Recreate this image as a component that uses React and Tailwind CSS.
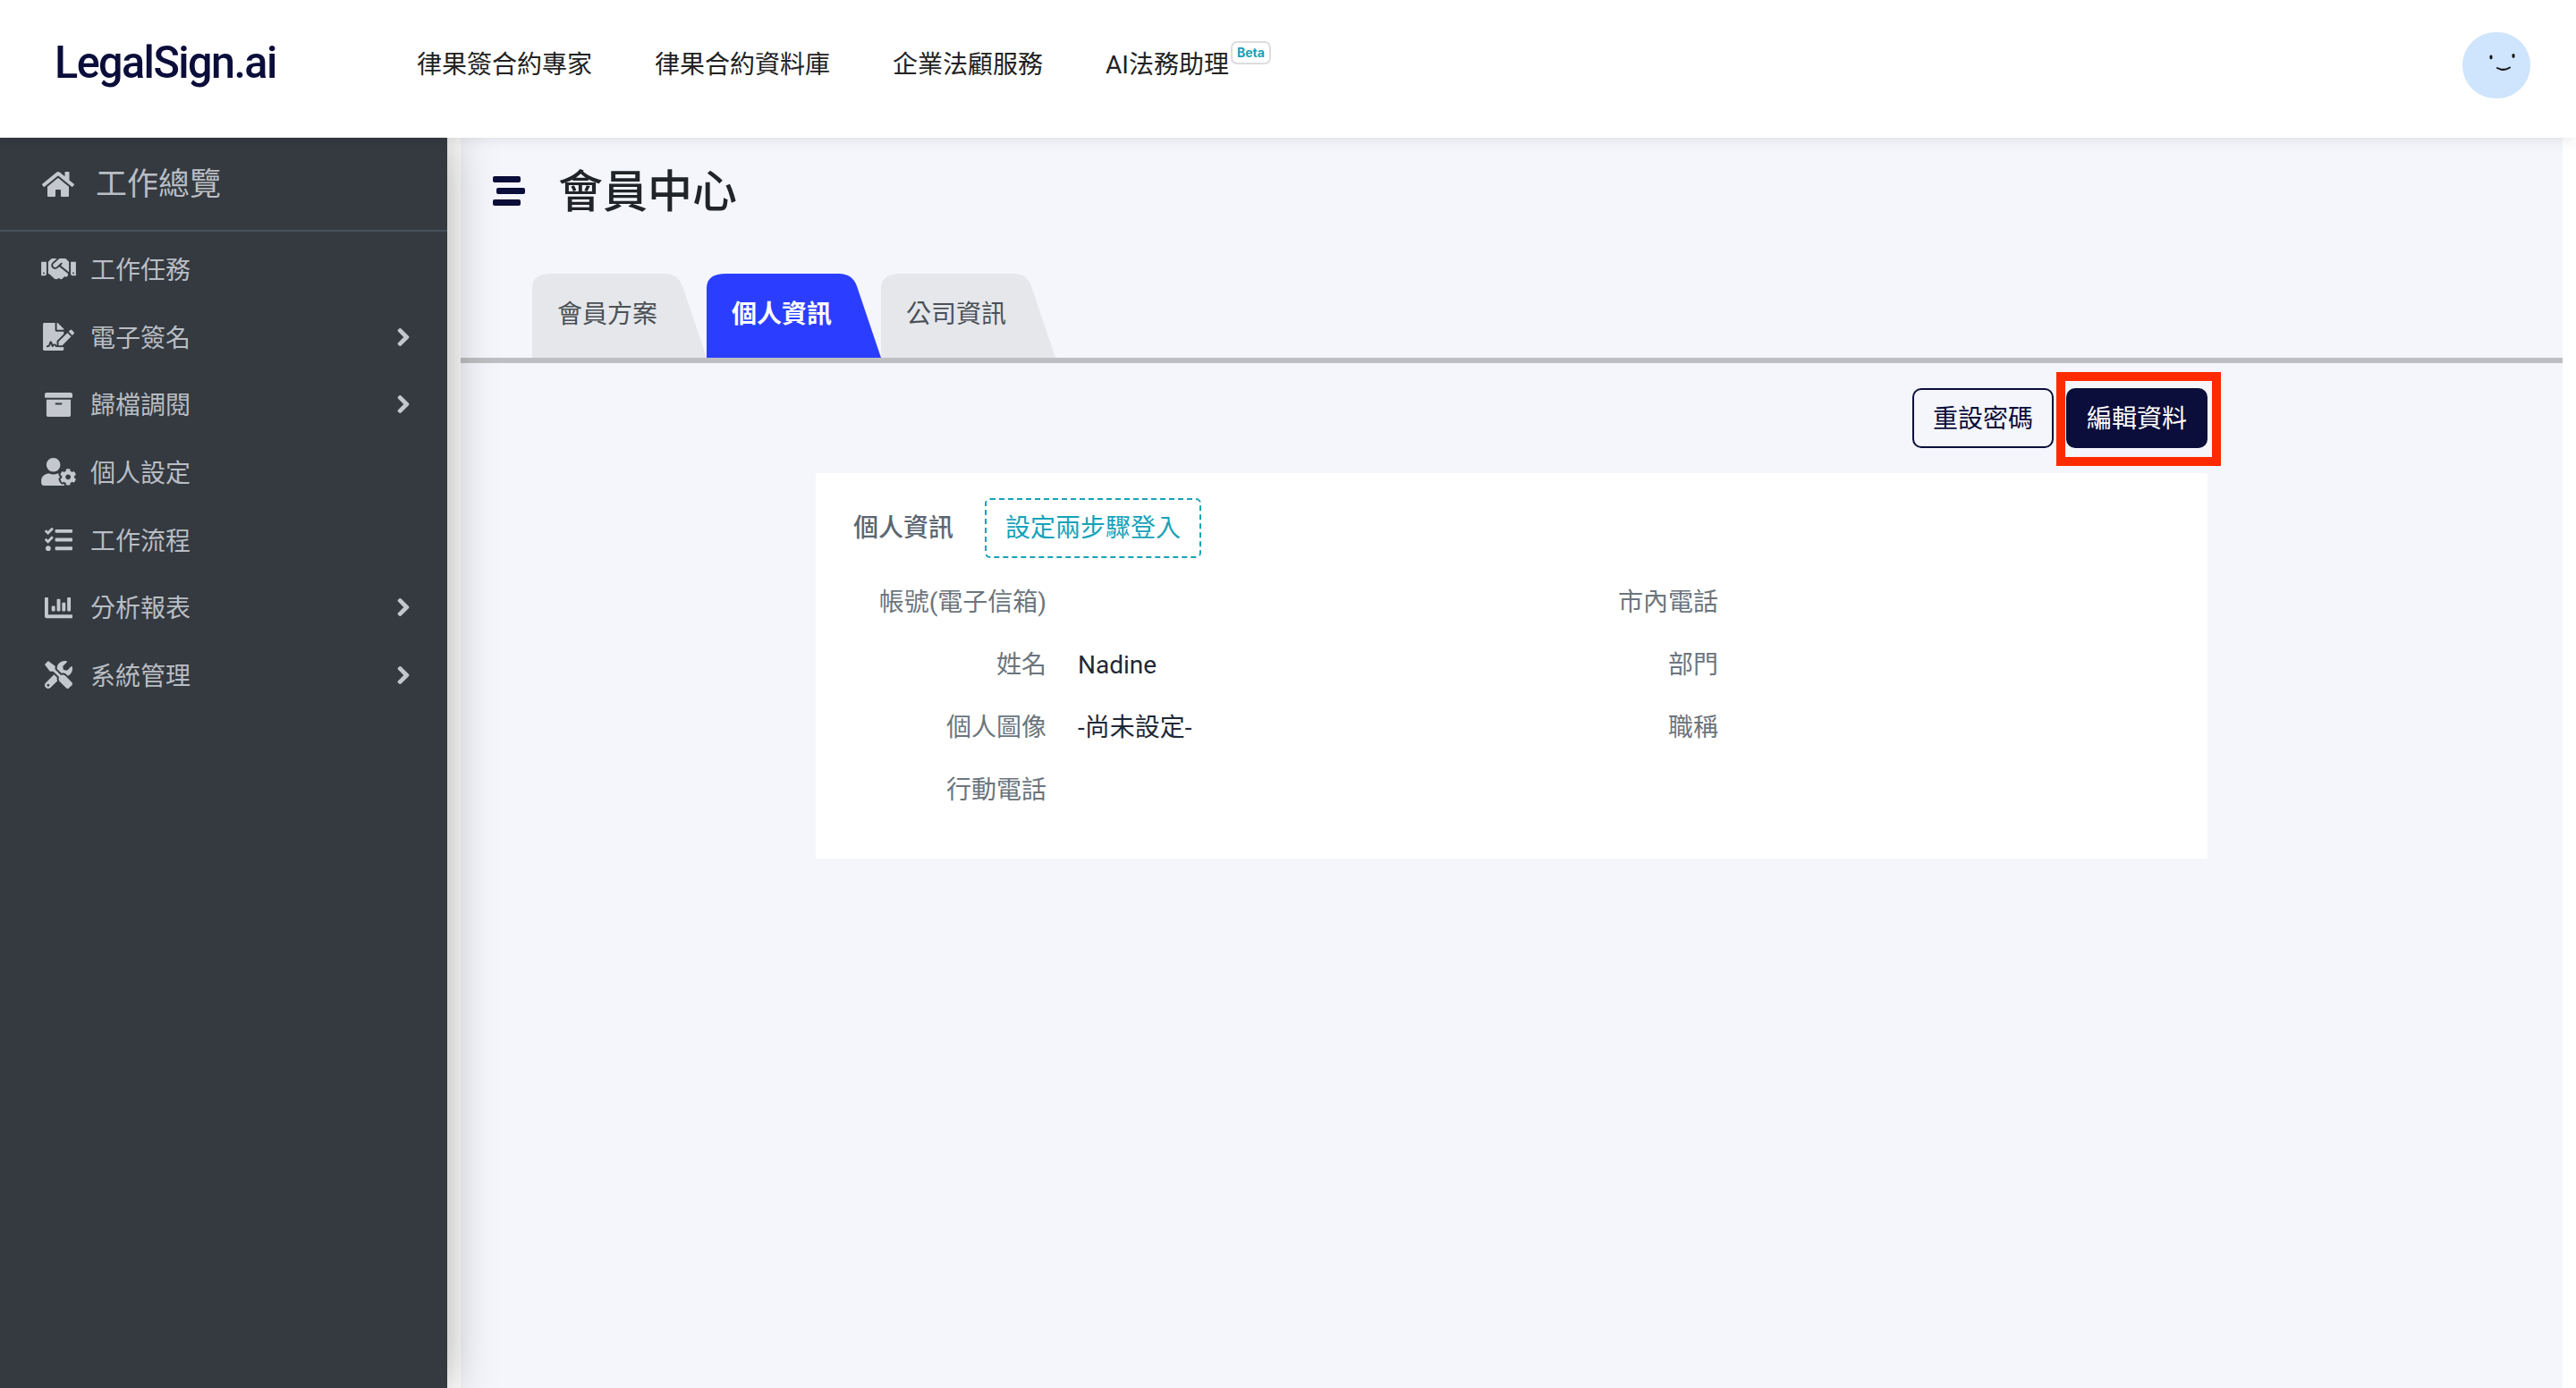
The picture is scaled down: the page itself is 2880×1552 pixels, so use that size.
import React from 'react';
import {
    FaHome,
    FaHandshake,
    FaFileSignature,
    FaArchive,
    FaUserCog,
    FaTasks,
    FaChartBar,
    FaTools,
    FaChevronRight,
} from 'react-icons/fa';

const navLinks = ['律果簽合約專家', '律果合約資料庫', '企業法顧服務'];

const menuItems = [
    { label: '工作任務', icon: FaHandshake },
    { label: '電子簽名', icon: FaFileSignature, arrow: true },
    { label: '歸檔調閱', icon: FaArchive, arrow: true },
    { label: '個人設定', icon: FaUserCog },
    { label: '工作流程', icon: FaTasks },
    { label: '分析報表', icon: FaChartBar, arrow: true },
    { label: '系統管理', icon: FaTools, arrow: true },
];

const tabs = [
    { label: '會員方案' },
    { label: '個人資訊', active: true },
    { label: '公司資訊' },
];

const leftRows = [
    { label: '帳號(電子信箱)', value: '' },
    { label: '姓名', value: 'Nadine' },
    { label: '個人圖像', value: '-尚未設定-' },
    { label: '行動電話', value: '' },
];

const rightRows = ['市內電話', '部門', '職稱'];

const Header = () => (
    <header className="relative z-20 flex h-[154px] shrink-0 items-center bg-white pb-[8px] pl-[61px] pr-[51px] shadow-[0_0_16px_rgba(0,0,0,0.12)]">
        <div className="w-[405px] pb-[6px]">
            <div className="origin-left scale-x-[0.97] font-['Roboto',sans-serif] text-[50px] font-medium leading-none tracking-[-1.6px] text-[#0b0d3a]">
                LegalSign.ai
            </div>
        </div>
        <nav className="flex flex-1 items-center gap-[70px] text-[28px] text-[#222]">
            {navLinks.map((link) => (
                <a key={link}>{link}</a>
            ))}
            <a className="flex items-start">
                AI法務助理
                <span className="ml-[2px] mt-[-6px] rounded-[7px] border-2 border-[#ddd] px-[5px] font-['Inter',sans-serif] text-[14px] font-bold leading-[22px] text-[#17a2b8]">
                    Beta
                </span>
            </a>
        </nav>
        <div className="h-[74px] w-[76px] rounded-full bg-[#cfe4fd]">
            <svg viewBox="0 0 76 74" className="h-full w-full">
                <ellipse cx="32" cy="28" rx="1.6" ry="2.4" fill="#111" />
                <ellipse cx="57" cy="26.5" rx="1.6" ry="2.4" fill="#111" />
                <path d="M39 40 Q46 44 53 39.5" fill="none" stroke="#111" strokeWidth="2" strokeLinecap="round" />
            </svg>
        </div>
    </header>
);

const Sidebar = () => (
    <aside className="relative z-10 w-[500px] shrink-0 bg-[#343a40] text-[#b9bdc4] shadow-[0_0_50px_rgba(0,0,0,0.34)]">
        <div className="flex h-[105px] items-center border-b-2 border-[#47505a] pl-[45px]">
            <FaHome className="h-[32px] w-[40px] text-[#c4c8ce]" />
            <span className="ml-[22px] mt-[3px] text-[35px]">工作總覽</span>
        </div>
        <ul className="pt-[4px]">
            {menuItems.map(({ label, icon: Icon, arrow }) => (
                <li key={label} className="flex h-[75.7px] items-center pl-[46px] pr-[42px]">
                    <span className="flex w-[39px] justify-center">
                        <Icon className="h-[31px] w-[39px] text-[#c4c8ce]" />
                    </span>
                    <span className="ml-[16px] mt-[4px] flex-1 text-[28px]">{label}</span>
                    {arrow && <FaChevronRight className="h-[22px] w-[14px] text-[#c4c8ce] [stroke-width:30px]" />}
                </li>
            ))}
        </ul>
    </aside>
);

const TabBar = () => (
    <div className="mt-[34px] flex border-b-[6px] border-[#bebfc2] pl-[80px]">
        {tabs.map((tab) => (
            <div
                key={tab.label}
                className={`flex h-[94px] w-[195px] items-center pb-[3px] pl-[28px] text-[28px] [clip-path:path('M0_94V16Q0_0_22_0H148Q163_0_168_14L195_94Z')] ${
                    tab.active ? 'bg-[#2b3eff] font-bold text-white' : 'bg-[#e5e7eb] text-[#4b5056]'
                }`}
            >
                {tab.label}
            </div>
        ))}
    </div>
);

const Actions = () => (
    <div className="flex justify-end gap-[14px] py-[28px] pr-[397px] text-[28px]">
        <button className="flex h-[67px] w-[158px] items-center justify-center rounded-[10px] border-2 border-[#0b0d3a] pt-[2px] text-[#0b0d3a]">
            重設密碼
        </button>
        <button className="relative flex h-[67px] w-[158px] items-center justify-center rounded-[10px] bg-[#0b0d3a] pt-[2px] text-white">
            編輯資料
            <span className="absolute bottom-[-20px] left-[-11px] right-[-15px] top-[-18px] border-[10px] border-[#ff2a00]" />
        </button>
    </div>
);

const InfoCard = () => (
    <section className="mx-[397px] h-[431px] bg-white pt-[28px] text-[28px]">
        <div className="flex items-center pl-[42px]">
            <h2 className="font-medium text-[#5c6670]">個人資訊</h2>
            <button className="ml-[35px] flex h-[67px] w-[242px] items-center justify-center rounded-[6px] border-2 border-dashed border-[#17a2b8] text-[#17a2b8]">
                設定兩步驟登入
            </button>
        </div>
        <div className="mt-[15px] grid grid-cols-2">
            <div>
                {leftRows.map((row) => (
                    <div key={row.label} className="flex h-[70px] items-center">
                        <span className="w-[258px] text-right text-[#6c757d]">{row.label}</span>
                        <span className="ml-[35px] text-[#1f2937]">{row.value}</span>
                    </div>
                ))}
            </div>
            <div>
                {rightRows.map((label) => (
                    <div key={label} className="flex h-[70px] items-center">
                        <span className="w-[231px] text-right text-[#6c757d]">{label}</span>
                    </div>
                ))}
            </div>
        </div>
    </section>
);

const App = () => (
    <div className="flex h-screen flex-col overflow-hidden bg-white font-['Roboto','Noto_Sans_CJK_TC',sans-serif]">
        <Header />
        <div className="flex min-h-0 flex-1">
            <Sidebar />
            <main className="ml-[15px] mr-[15px] flex-1 bg-[#f4f6fb]">
                <div className="flex h-[118px] items-center pl-[36px]">
                    <div className="flex w-[36px] flex-col items-start gap-[6px]">
                        <span className="h-[7px] w-[31px] rounded-[2px] bg-[#0b0d3a]" />
                        <span className="ml-[4px] h-[7px] w-[32px] rounded-[2px] bg-[#0b0d3a]" />
                        <span className="h-[7px] w-[31px] rounded-[2px] bg-[#0b0d3a]" />
                    </div>
                    <h1 className="ml-[37px] mt-[3px] text-[50px] font-medium leading-none text-[#212529]">會員中心</h1>
                </div>
                <TabBar />
                <Actions />
                <InfoCard />
            </main>
        </div>
    </div>
);

export default App;
